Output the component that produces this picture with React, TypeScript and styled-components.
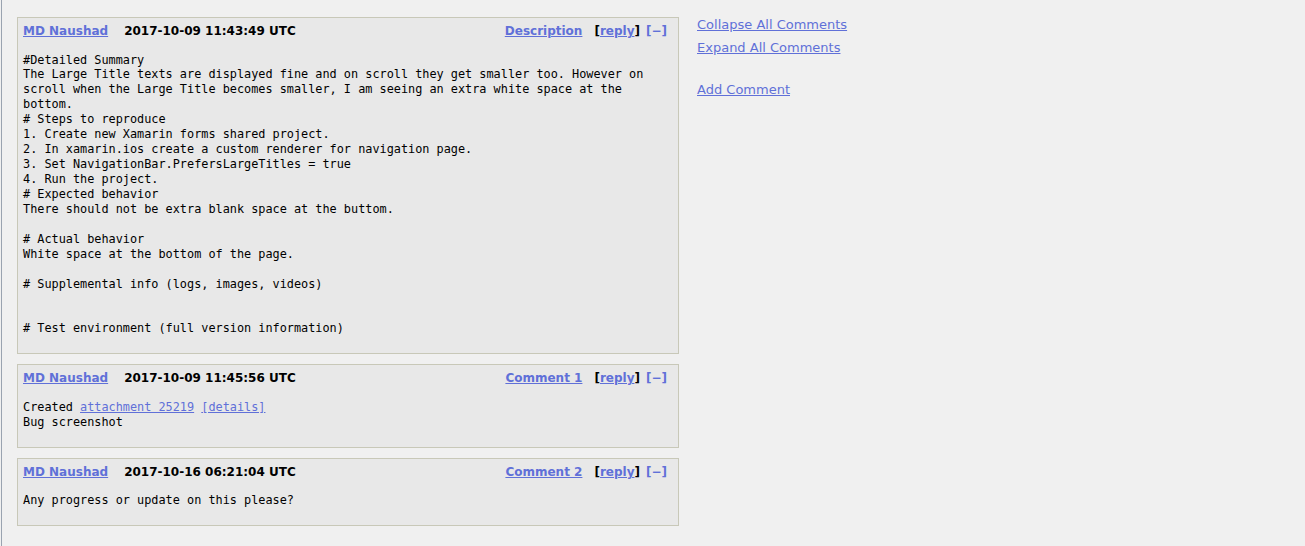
import React from "react"
import styled, { createGlobalStyle } from "styled-components"

interface CommentData {
  id: number
  author: string
  time: string
  label: string
  body: React.ReactNode
}

const GlobalStyle = createGlobalStyle`
  html, body {
    margin: 0;
    padding: 0;
    background: #f0f0f0;
  }
  body {
    font-family: "DejaVu Sans", Verdana, sans-serif;
    font-size: 12px;
    color: #000;
  }
`

const Page = styled.div`
  min-height: 546px;
  box-sizing: border-box;
  border-left: 1px solid #9aa3b0;
  margin-left: 1px;
  padding: 17px 0 0 15px;
  display: flex;
  align-items: flex-start;
  gap: 18px;
`

const CommentList = styled.div`
  width: 662px;
  display: flex;
  flex-direction: column;
  gap: 10px;
`

const CommentBox = styled.div`
  background: #e8e8e8;
  border: 1px solid #c8c8b8;
  padding: 6px 11px 17px 5px;
`

const CommentHead = styled.div`
  display: flex;
  align-items: center;
  height: 14px;
  font-weight: bold;
  font-size: 12px;
`

const Author = styled.a`
  color: #6070d8;
  text-decoration: underline;
  margin-right: 16px;
`

const Time = styled.span`
  color: #000;
`

const HeadLinks = styled.span`
  margin-left: auto;
  display: flex;
  gap: 12px;
`

const Link = styled.a`
  color: #6070d8;
  text-decoration: underline;
`

const Bracket = styled.span`
  color: #000;
`

const Collapse = styled.a`
  color: #6070d8;
  text-decoration: none;
  margin-left: 6px;
`

const Body = styled.pre`
  margin: 14.5px 0 0;
  font-family: "DejaVu Sans Mono", "Liberation Mono", monospace;
  font-size: 11.85px;
  line-height: 14.94px;
  white-space: pre-wrap;
`

const BodyLink = styled.a`
  color: #6070d8;
  text-decoration: underline;
  line-height: 1;
`

const Sidebar = styled.div`
  display: flex;
  flex-direction: column;
`

const SideLink = styled.a<{ $gap?: number }>`
  color: #6070d8;
  text-decoration: underline;
  font-size: 13px;
  line-height: 16px;
  margin-bottom: ${({ $gap }) => $gap ?? 7}px;
`

const description = `#Detailed Summary
The Large Title texts are displayed fine and on scroll they get smaller too. However on
scroll when the Large Title becomes smaller, I am seeing an extra white space at the
bottom.
# Steps to reproduce
1. Create new Xamarin forms shared project.
2. In xamarin.ios create a custom renderer for navigation page.
3. Set NavigationBar.PrefersLargeTitles = true
4. Run the project.
# Expected behavior
There should not be extra blank space at the buttom.

# Actual behavior
White space at the bottom of the page.

# Supplemental info (logs, images, videos)


# Test environment (full version information)`

const comments: CommentData[] = [
  {
    id: 0,
    author: "MD Naushad",
    time: "2017-10-09 11:43:49 UTC",
    label: "Description",
    body: description,
  },
  {
    id: 1,
    author: "MD Naushad",
    time: "2017-10-09 11:45:56 UTC",
    label: "Comment 1",
    body: (
      <>
        Created <BodyLink href="#">attachment 25219</BodyLink>{" "}
        <BodyLink href="#">[details]</BodyLink>
        {"\nBug screenshot"}
      </>
    ),
  },
  {
    id: 2,
    author: "MD Naushad",
    time: "2017-10-16 06:21:04 UTC",
    label: "Comment 2",
    body: "Any progress or update on this please?",
  },
]

const App = (): JSX.Element => (
  <>
    <GlobalStyle />
    <Page>
      <CommentList>
        {comments.map(
          (comment): JSX.Element => (
            <CommentBox key={`comment-${comment.id}`}>
              <CommentHead>
                <Author href="#">{comment.author}</Author>
                <Time>{comment.time}</Time>
                <HeadLinks>
                  <Link href="#">{comment.label}</Link>
                  <span>
                    <Bracket>[</Bracket>
                    <Link href="#">reply</Link>
                    <Bracket>]</Bracket>
                    <Collapse href="#">[−]</Collapse>
                  </span>
                </HeadLinks>
              </CommentHead>
              <Body>{comment.body}</Body>
            </CommentBox>
          )
        )}
      </CommentList>
      <Sidebar>
        <SideLink href="#">Collapse All Comments</SideLink>
        <SideLink href="#" $gap={26}>
          Expand All Comments
        </SideLink>
        <SideLink href="#">Add Comment</SideLink>
      </Sidebar>
    </Page>
  </>
)

export default App
